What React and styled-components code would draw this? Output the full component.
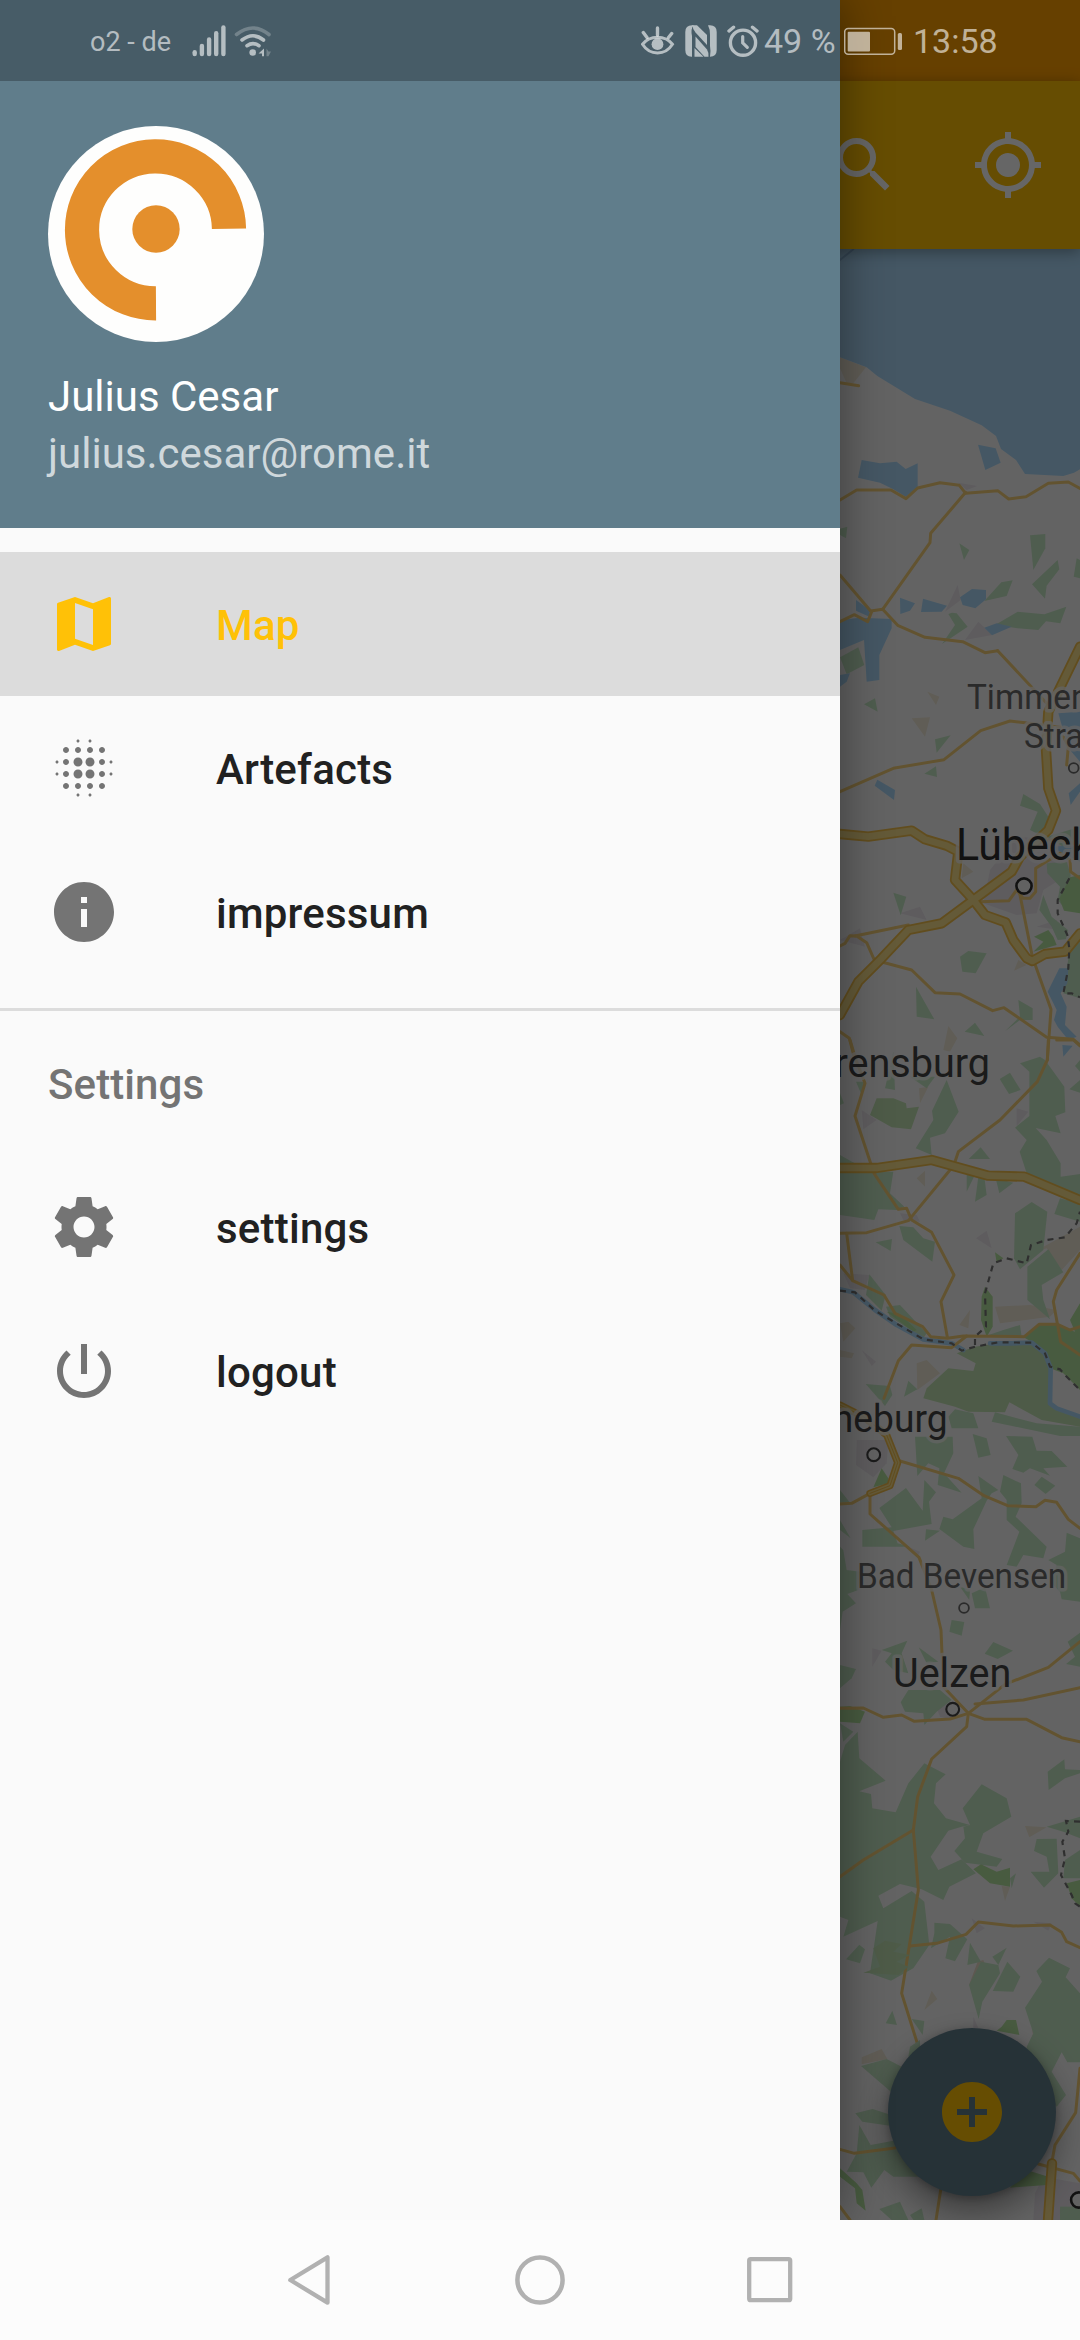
import React from "react";
import styled, { createGlobalStyle } from "styled-components";
import { MdMap, MdBlurOn, MdInfo, MdSearch, MdMyLocation, MdAddCircle } from "react-icons/md";

const GlobalStyle = createGlobalStyle`
  *, *::before, *::after { box-sizing: border-box; }
  body { margin: 0; font-family: Roboto, "Noto Sans", sans-serif; }
  svg { display: block; }
`;

const Screen = styled.div`
  width: 1080px;
  height: 2340px;
  display: flex;
  flex-direction: column;
  overflow: hidden;
  background: #fcfcfc;
`;

const AppWindow = styled.div`
  position: relative;
  flex: 1;
  min-height: 0;
  overflow: hidden;
`;

const Page = styled.main`
  height: 100%;
  display: flex;
  flex-direction: column;
`;

const StatusBackdrop = styled.div`
  height: 81px;
  background: ${(p) => p.$color};
  flex: none;
`;

const AppBar = styled.header`
  height: 168px;
  flex: none;
  display: flex;
  align-items: center;
  justify-content: flex-end;
  gap: 72px;
  padding: 0 36px;
  background: #ffc107;
  color: #fff;
  box-shadow: 0 3px 14px rgba(0, 0, 0, 0.35);
  z-index: 1;
`;

const MapArea = styled.section`
  position: relative;
  flex: 1;
  min-height: 0;
  overflow: hidden;
  background: #f8f8f8;
`;

const Fab = styled.button`
  position: absolute;
  right: 24px;
  bottom: 24px;
  width: 168px;
  height: 168px;
  padding: 0;
  border: 0;
  border-radius: 50%;
  display: grid;
  place-items: center;
  background: #607d8b;
  color: #ffc107;
  box-shadow: 0 16px 34px rgba(0, 0, 0, 0.4), 0 2px 8px rgba(0, 0, 0, 0.25);
`;

const Scrim = styled.div`
  position: absolute;
  inset: 0;
  z-index: 2;
  background: rgba(0, 0, 0, 0.6);
`;

const Drawer = styled.aside`
  position: absolute;
  inset: 0 auto 0 0;
  z-index: 3;
  width: 840px;
  background: #fafafa;
  box-shadow: 0 0 46px rgba(0, 0, 0, 0.42);
`;

const DrawerHeader = styled.div`
  height: 528px;
  display: flex;
  flex-direction: column;
  background: #607d8b;
`;

const Account = styled.div`
  display: flex;
  flex-direction: column;
  align-items: flex-start;
  padding: 45px 48px 0;
`;

const Avatar = styled.div`
  width: 216px;
  height: 216px;
  border-radius: 50%;
  overflow: hidden;
  background: #fefefd;
`;

const AccountLine = styled.div`
  margin-top: ${(p) => p.$gap}px;
  font-size: 42px;
  line-height: 50px;
  color: ${(p) => p.$color};
`;

const Menu = styled.nav`
  padding-top: 24px;
`;

const MenuItem = styled.a`
  height: 144px;
  padding: 0 48px;
  display: flex;
  align-items: center;
  gap: 96px;
  color: ${(p) => (p.$active ? "#ffc107" : "#212121")};
  background: ${(p) => (p.$active ? "#dcdcdc" : "transparent")};
  svg { flex: none; color: ${(p) => (p.$active ? "#ffc107" : "#747474")}; }
`;

const MenuLabel = styled.span`
  padding-top: 3px;
  font-size: 42px;
  font-weight: 500;
  line-height: 50px;
  letter-spacing: 0.22px;
`;

const Divider = styled.div`
  height: 3px;
  margin-top: 24px;
  background: #dcdcdc;
`;

const SectionTitle = styled.h2`
  height: 144px;
  margin: 0;
  padding: 3px 48px 0;
  display: flex;
  align-items: center;
  font-size: 42px;
  font-weight: 500;
  letter-spacing: 0.1px;
  color: #747474;
`;

const StatusBar = styled.div`
  position: absolute;
  inset: 0 0 auto 0;
  z-index: 4;
  height: 81px;
  padding: 0 83px 0 90px;
  display: flex;
  align-items: center;
  justify-content: space-between;
  color: rgba(255, 255, 255, 0.6);
`;

const StatusGroup = styled.div`
  display: flex;
  align-items: center;
  gap: ${(p) => p.$gap}px;
`;

const StatusText = styled.span`
  font-size: ${(p) => p.$size}px;
  line-height: 40px;
  padding-top: ${(p) => p.$drop || 0}px;
  width: ${(p) => p.$width}px;
  margin-left: ${(p) => p.$shift || 0}px;
  white-space: nowrap;
`;

const NavBar = styled.footer`
  height: 120px;
  flex: none;
  display: flex;
  justify-content: center;
  background: #fcfcfc;
`;

const NavButton = styled.button`
  width: 230px;
  padding: 0;
  border: 0;
  background: none;
  display: grid;
  place-items: center;
`;

const GEAR =
  "M19.43 12.98c.04-.32.07-.64.07-.98s-.03-.66-.07-.98l2.11-1.65c.19-.15.24-.42.12-.64l-2-3.46c-.12-.22-.39-.3-.61-.22l-2.49 1c-.52-.4-1.08-.73-1.69-.98l-.38-2.65C14.46 2.18 14.25 2 14 2h-4c-.25 0-.46.18-.49.42l-.38 2.65c-.61.25-1.17.59-1.69.98l-2.49-1c-.23-.09-.49 0-.61.22l-2 3.46c-.13.22-.07.49.12.64l2.11 1.65c-.04.32-.07.65-.07.98s.03.66.07.98l-2.11 1.65c-.19.15-.24.42-.12.64l2 3.46c.12.22.39.3.61.22l2.49-1c.52.4 1.08.73 1.69.98l.38 2.65c.03.24.24.42.49.42h4c.25 0 .46-.18.49-.42l.38-2.65c.61-.25 1.17-.59 1.69-.98l2.49 1c.23.09.49 0 .61-.22l2-3.46c.12-.22.07-.49-.12-.64l-2.11-1.65zM12 15.5c-1.93 0-3.5-1.57-3.5-3.5s1.57-3.5 3.5-3.5 3.5 1.57 3.5 3.5-1.57 3.5-3.5 3.5z";
const POWER =
  "M13 3h-2v10h2V3zm4.83 2.17l-1.42 1.42C17.99 7.86 19 9.81 19 12c0 3.87-3.13 7-7 7s-7-3.13-7-7c0-2.19 1.01-4.14 2.58-5.42L6.17 5.17C4.23 6.82 3 9.26 3 12c0 4.97 4.03 9 9 9s9-4.03 9-9c0-2.74-1.23-5.18-3.17-6.83z";

const GlyphIcon = ({ d }) => (
  <svg width="72" height="72" viewBox="0 0 24 24" fill="currentColor"><path d={d} /></svg>
);

// Map tiles, stacked north to south. Units are thirds of a pixel.
const TILES = [
  {
    y: 240,
    sand: ["30,352 108,382 70,430 50,430 30,385"],
    town: ["383,1035 392,1080 345,1115", "445,1145 487,1185 405,1200", "385,728 442,738 410,750"],
    wood: [
      "30,866 52,860 48,895 30,885", "388,910 418,930 402,960", "600,886 646,882 646,925 610,990",
      "683,960 688,988 650,1037 645,1076 606,1033", "740,955 750,960 750,1015 731,1010",
      "514,1027 548,1021 530,1068 463,1083",
      "563,1115 643,1123 709,1100 691,1150 648,1144 625,1170 563,1165 495,1155",
      "366,1118 380,1120 413,1160 336,1212 375,1155 355,1122",
    ],
    water: [
      "30,0 750,0 750,688 732,698 700,708 585,702 558,660 513,627 498,588 455,556 360,512 255,477 142,408 110,382 30,352",
      "95,660 150,670 200,665 227,687 263,670 263,745 227,770 190,748 150,728 84,713",
      "444,614 497,625 512,668 466,690", "390,1072 426,1047 468,1050 468,1078 436,1105 398,1095",
      "210,1073 255,1090 240,1112 211,1122", "279,1076 351,1097 335,1115 273,1116",
      "78,1080 120,1110 118,1130 78,1112", "463,1163 500,1150 545,1160 486,1186",
      "30,1140 90,1133 185,1137 185,1165 148,1245 148,1320 110,1325 102,1200 30,1230",
    ],
    roads: [
      "30,780 80,750 183,750 228,776 263,744 330,728 388,736 407,760 503,752 536,777 588,770 655,730 715,726 750,745",
      "407,757 302,880 300,908 158,1108",
      "30,1005 122,1113 158,1108 203,1156 285,1192 398,1205 465,1238 503,1232",
      "30,1145 73,1124 113,1145 125,1115", "30,428 86,437",
    ],
    ferry: ["30,60 70,28"],
  },
  {
    y: 640,
    sand: ["245,235 300,232 285,290", "292,155 328,170 318,195", "355,1158 382,1195 360,1235 340,1230", "400,670 430,695 395,715", "565,960 590,975 552,992"],
    town: [
      "480,690 560,590 700,600 720,700 640,750 620,820 560,825 460,790",
      "210,820 270,800 290,840", "30,900 90,865 105,920", "620,860 680,840 690,870",
    ],
    wood: [
      "30,52 85,22 103,75 50,103", "135,175 102,193 143,215", "315,298 362,286 320,338", "318,379 321,411 283,401",
      "580,462 630,492 655,530 640,590 600,570 623,515 570,497",
      "650,670 710,665 722,705 715,760 700,800 683,780 690,740 652,700", "650,590 750,560 750,610 700,620",
      "640,765 665,830 714,870 708,898 683,900 665,860 628,810", "720,920 750,890 750,1075 700,1060",
      "390,950 415,933 470,940 437,1000 397,995", "190,758 229,770 212,826", "258,1040 313,1138 260,1130",
      "565,1080 608,1105 608,1140 570,1140 525,1174 570,1130", "435,1148 463,1188 404,1175",
    ],
    park: ["750,705 720,712 688,775 702,812 750,820", "612,890 655,870 670,890 680,915 610,935 640,905"],
    water: [
      "30,105 60,100 50,125 30,140", "142,419 195,450 192,480 134,437",
      "685,220 750,215 750,365 720,330 695,255", "716,460 750,430 750,455 722,495",
      "660,620 750,615 750,665 700,640",
      "688,985 715,985 712,1030 692,1060 710,1100 705,1155 740,1190 715,1200 683,1160 672,1140 680,1110 653,1055",
      "697,1215 728,1217 700,1250",
    ],
    roads: [
      "503,32 650,190", "30,455 190,385 342,359 452,272 540,243 600,250 690,262", "700,290 715,320 710,375",
      "75,888 235,855",
      "30,918 45,910 60,887 80,888 110,908 133,960 245,990 315,1058 390,1062 488,1112 522,1103 650,1192 730,1198 750,1215",
      "570,765 607,950 663,1108 652,1260",
      "450,785 537,782 560,750 580,775 600,775 617,755 617,685 690,640 720,660 722,695 750,715",
      "30,1175 58,1195 75,1260", "600,600 690,600 750,615",
    ],
    highways: [
      "750,20 655,215 648,330 655,445 678,512 655,570 570,650 545,695 430,780 335,850 235,870 155,955 85,1025 30,1125",
      "30,582 115,590 245,572 285,598 350,617 385,635 375,720 430,780 465,825 527,847 550,900 590,955 607,963 645,942 705,935 750,880",
    ],
    borders: ["718,715 683,780 683,820 712,885 718,925 715,985 700,1060 725,1060 750,1072"],
  },
  {
    y: 1040,
    sand: [
      "605,640 750,560 750,630 695,690 650,625", "495,800 600,795 680,810 660,830 510,850",
      "260,970 290,960 330,1000 262,1050", "30,850 55,845 76,865 40,905", "267,145 295,140 270,190",
      "420,810 415,865 388,855", "260,415 285,392 285,440", "30,930 72,940 65,955 30,950",
    ],
    town: [
      "95,210 140,240 100,268", "560,205 595,215 560,258", "470,572 485,625 438,595",
      "40,700 118,705 105,750 60,745", "95,930 138,965 125,978", "210,520 260,525 270,545 220,540",
    ],
    wood: [
      "570,70 630,50 645,60 703,140 706,217 676,228 692,280 617,264 650,300 692,370 692,410 750,402 750,480 690,455 590,400 569,335 590,300 555,263 598,228 598,95",
      "540,98 572,150 537,162 509,117", "350,120 386,215 345,280 300,293 305,345 257,325 310,240 306,213",
      "452,322 480,357 416,357", "410,400 432,410 410,455", "445,410 463,410 470,465 435,485", "497,415 550,428 508,460",
      "30,345 120,395 190,395 180,460 223,500 200,510 145,508 133,540 30,525",
      "605,486 652,515 640,630 570,688 552,655 555,520", "690,475 750,490 750,545 673,522",
      "208,558 250,562 280,595 315,605 307,665 220,600", "137,607 186,597 182,633",
      "655,628 700,697 635,735 640,780 660,838 592,780 592,680", "118,703 167,765 155,812 108,765",
      "168,800 210,795 290,880 280,895 180,830", "520,870 570,855 575,890 460,890",
      "375,1108 430,1120 445,1165 365,1165 355,1130", "495,1117 620,1150 750,1160 750,1188 690,1188 485,1145",
      "107,1032 180,1038 187,1065 165,1098", "235,1022 262,1048 222,1070", "428,1182 470,1195 482,1245 445,1253",
      "78,125 105,125 95,165", "190,35 195,150 165,145", "240,110 315,110 290,145", "30,160 42,190 30,195", "750,60 735,78 750,95", "750,120 718,148 750,158",
    ],
    meadow: [
      "380,940 435,920 500,910 605,908 650,950 660,1000 665,1100 750,1130 750,1160 635,1140 538,1087 525,1117 415,1115 375,1100 280,1075 290,1045 355,985 430,993 437,970",
      "140,175 190,175 228,190 230,205 267,200 243,268 185,262 120,225",
    ],
    park: [
      "465,740 488,770 488,860 470,890 453,840 455,770", "495,637 520,655 500,668",
      "583,893 627,855 683,855 735,875 720,840 750,790 750,1050 700,1000 660,985 640,935 605,905",
      "170,815 210,822 260,870 250,875",
    ],
    rivers: [
      "30,748 70,757 135,810 200,855 280,898 365,910 400,930", "480,910 545,910 605,908 645,940 662,985 660,1090 680,1105 750,1130",
    ],
    roads: [
      "60,0 78,60 105,130 75,228 122,370 132,400 205,508 230,505 245,540 305,577 372,705 333,785 352,892",
      "655,0 652,60 622,125 510,240 385,335 375,365 360,390 245,530 235,542 110,578 30,580",
      "50,580 68,722 162,765 195,820 278,860 302,890 352,895 400,888 583,890 627,853 683,853 720,870 750,860",
      "30,675 68,722", "410,888 365,923 245,915 205,962 162,1075", "750,640 680,750 670,785 692,905 750,945",
      "680,0 730,0 750,18",
    ],
    highways: ["30,384 140,384 305,360 475,407 583,410 750,480"],
    borders: [
      "30,752 75,757 135,812 280,898 365,910 395,932 435,920 505,907 605,908 645,940 660,980 690,988 705,1005 750,1050",
      "435,915 435,890 468,860 465,760 490,670 530,655 590,670 603,615 650,600 705,592 740,550 750,515",
    ],
  },
  {
    y: 1440,
    sand: ["585,1158 650,1162 598,1192"],
    town: ["80,0 175,0 170,70 130,112 78,75", "235,320 270,335 262,350", "127,625 155,632 127,680", "320,805 350,790 370,840 330,830"],
    wood: [
      "255,-10 368,-10 370,40 342,100 395,158 323,135 328,85 295,70 262,108",
      "528,-12 607,-10 620,32 665,33 712,80 640,85 660,107 600,85 580,98 547,87 565,45",
      "30,240 62,295 30,270", "30,150 60,188 30,188",
      "228,144 278,212 283,120 318,157 297,185 305,252 190,273 203,310 240,320 97,320 97,270 185,262 148,204",
      "288,268 330,272 285,302",
      "445,108 505,150 485,160 470,182 430,268 433,327 400,320 328,267 340,230 368,238 455,175",
      "520,105 573,130 575,190 557,230 650,320 640,355 580,345 560,380 530,375 568,275 530,240 530,180 510,155",
      "635,110 676,137 647,162 613,135",
      "30,320 40,330 50,390 90,395 85,450 52,462 78,490 38,515 30,570",
      "710,278 750,295 750,485 695,478 690,455 665,430 680,375 655,360 705,335",
      "425,460 465,442 480,505 435,505", "365,540 403,546 395,587 358,575", "390,440 420,450 418,480",
      "490,606 549,632 503,657 464,641", "713,605 750,578 750,680 708,672 735,650",
      "30,675 78,687 65,715 30,745",
      "155,630 232,602 215,640 235,700 190,690 165,665 185,640", "266,622 325,665 290,670",
      "235,750 330,750 365,780 320,815 283,855 280,820 225,815 212,787", "30,850 70,875 40,905",
      "30,965 45,915 83,875 88,955 167,1022 88,1054 123,1062 127,1105 197,1117 235,1030 283,970 347,1003 318,1030 312,1090 348,1135 420,1155 395,1160 355,1172 302,1250 325,1290 395,1258 438,1300 358,1340 340,1380 275,1348 210,1332 145,1367 160,1405 245,1353 283,1385 298,1515 250,1585 183,1622 120,1600 143,1443 40,1490 55,1440 30,1430",
      "455,1033 530,1075 544,1130 460,1180 440,1235 517,1257 500,1280 405,1268 373,1233 405,1195 400,1160 420,1155 398,1105",
      "653,995 703,958 705,988 750,990 750,1000 705,1015 656,1050", "650,1160 750,1130 750,1195 700,1175",
    ],
    park: ["30,800 60,798 105,815 90,850 30,845", "155,85 175,115 175,130 130,142"],
    roads: [
      "200,60 385,115 462,167 533,197 618,200 645,181 680,187 715,238 750,265",
      "30,192 65,190 120,160 120,222 267,352 305,450 333,570 340,740 415,820 410,860 305,957 263,1070 250,1170 265,1350 215,1660 265,1820",
      "30,805 100,804 160,832 215,825 253,844 360,837 415,820 525,733 655,682 750,605",
      "435,792 580,780 750,743", "415,820 465,838 590,838 695,893 750,905", "250,1170 100,1260 30,1310",
    ],
    arterials: ["30,-105 100,-70 170,-15 203,68 180,137 120,160"],
  },
  {
    y: 1820,
    sand: [
      "95,712 155,687 172,717 95,733", "305,512 322,537 283,570", "605,625 655,635 610,650", "515,198 540,200 525,243",
    ],
    town: ["425,295 465,325 440,340", "610,305 665,310 655,332", "640,1070 750,1090 750,1200 610,1200 615,1120", "430,590 445,625 430,625"],
    wood: [
      "620,57 680,56 685,160 642,203 602,155 658,155 650,110 612,93", "540,175 558,160 545,205",
      "705,120 750,90 750,175 700,175", "313,308 360,312 412,358 375,424 346,415 360,350 303,385 313,340",
      "420,368 453,425 412,435", "453,425 505,435 510,460 457,545 446,597 417,495", "487,410 530,383 505,435",
      "532,425 571,470 550,515 488,513",
      "657,413 720,445 707,472 750,520 750,727 712,727 695,697 665,755 708,825 680,860 590,760 590,680 610,640 585,563 636,485 619,453",
      "88,374 105,388 90,430 48,418", "187,572 201,615 167,610", "245,597 283,603 278,645",
      "240,680 270,660 270,700 235,710", "93,738 170,717 215,740 200,830", "76,880 128,867 200,890 200,920 97,905",
      "88,915 122,975 190,962 230,990 280,1070 190,1070 163,1050 124,1103 100,1057 50,1055 80,1000",
      "148,1167 210,1145 235,1200 185,1200", "240,1185 275,1165 283,1200 250,1200", "690,1160 750,1160 750,1200 690,1200",
    ],
    park: [
      "430,148 453,133 500,155 540,143 540,200 480,190", "710,190 750,180 750,260 725,235",
      "515,620 530,600 558,600 568,645 500,632", "30,1045 80,1090 97,1110 107,1172 80,1150 75,1105 30,1070",
      "590,1050 655,1070 650,1095 540,1103",
    ],
    meadow: ["130,385 165,362 215,372 190,395 240,405 200,425 235,440 205,465 100,458 150,440"],
    clay: ["443,425 460,420 473,455 417,495"],
    roads: [
      "240,378 320,370 408,343 445,306 550,318 660,315 695,337 710,365 750,383", "30,988 73,1000 195,984",
      "30,1160 60,1200", "332,1110 318,1200", "750,745 737,878 675,975 665,1030", "625,1032 730,1060 750,1083",
    ],
    highways: ["666,1030 653,1215"],
    borders: ["750,5 708,3 715,35 697,65 705,115 693,165 725,225 735,250 750,260"],
  },
];

const AREAS = [
  ["sand", "#f0e8d6"],
  ["town", "#ebe5ec"],
  ["clay", "#eadcc8"],
  ["wood", "#c6e8c6"],
  ["meadow", "#c3e4b4"],
  ["park", "#b5e3a0"],
  ["water", "#acdafa"],
];

const LINES = [
  ["rivers", "#acdafa", 14],
  ["ferry", "#8fbbe0", 6],
  ["roads", "#f6cf78", 9],
  ["arterials", "#f3bf4e", 22],
  ["arterials", "#fbe08c", 12],
  ["arterials", "#f3bf4e", 3],
  ["highways", "#f3c04d", 31],
  ["highways", "#fbe08c", 20],
];

const MapTile = ({ tile }) => (
  <g transform={`translate(830 ${tile.y - 249}) scale(${1 / 3})`}>
    {AREAS.map(([kind, color]) =>
      (tile[kind] || []).map((points) => <polygon key={points} points={points} fill={color} />)
    )}
    {LINES.map(([kind, color, width]) =>
      (tile[kind] || []).map((points) => (
        <polyline key={points + width} points={points} fill="none" stroke={color} strokeWidth={width} strokeLinejoin="round" strokeLinecap="round" />
      ))
    )}
    {(tile.borders || []).map((points) => (
      <polyline key={points} points={points} fill="none" stroke="#757575" strokeWidth="6.5" strokeDasharray="18 16" />
    ))}
  </g>
);

const PLACES = [
  { name: "Timmendorfer", x: 967, y: 708.5, size: 34.5, color: "#6a6a6a" },
  { name: "Strand", x: 1024, y: 747.5, size: 34.5, color: "#6a6a6a", dot: [1073.7, 768, 4.9, 1.8] },
  { name: "Lübeck", x: 956, y: 860, size: 44.5, color: "#2d2d2d", dot: [1024, 886, 7.6, 2.6] },
  { name: "Ahrensburg", x: 990, y: 1077, size: 41, color: "#454545", end: true },
  { name: "Lüneburg", x: 947.5, y: 1432.3, size: 38.5, color: "#454545", end: true, dot: [873.7, 1454.7, 6.4, 2.1] },
  { name: "Bad Bevensen", x: 857, y: 1587.7, size: 34.5, color: "#6a6a6a", dot: [964, 1608, 4.9, 1.8] },
  { name: "Uelzen", x: 893, y: 1686.7, size: 41, color: "#454545", dot: [952.7, 1709.3, 6.4, 2.1] },
  { name: "", x: 0, y: 0, size: 0, color: "#2d2d2d", dot: [1078.7, 2200, 7.6, 2.6] },
];

const PlaceName = styled.text`
  font-family: Roboto, "Noto Sans", sans-serif;
  paint-order: stroke;
  stroke: rgba(248, 248, 248, 0.75);
  stroke-width: 7px;
  stroke-linejoin: round;
`;

const MapView = () => (
  <svg width="1080" height="1971" viewBox="0 0 1080 1971">
    {TILES.map((tile) => <MapTile key={tile.y} tile={tile} />)}
    {PLACES.map((p) => (
      <g key={p.name + p.x}>
        {p.name && (
          <PlaceName
            transform={`translate(${p.x} ${p.y - 249}) scale(0.965 1)`}
            fontSize={p.size}
            fill={p.color}
            textAnchor={p.end ? "end" : "start"}
          >
            {p.name}
          </PlaceName>
        )}
        {p.dot && (
          <circle cx={p.dot[0]} cy={p.dot[1] - 249} r={p.dot[2]} fill="#f4f4f4" stroke={p.color} strokeWidth={p.dot[3]} />
        )}
      </g>
    ))}
  </svg>
);

const AvatarMark = () => (
  <svg width="216" height="216" viewBox="0 0 216 216">
    <path d="M108 177.3A73.5 73.5 0 1 1 181 102.7" fill="none" stroke="#e48f2c" strokeWidth="34.2" />
    <circle cx="108" cy="103" r="23.7" fill="#e48f2c" />
  </svg>
);

const SignalIcon = () => (
  <svg width="34" height="32" viewBox="192 24 34 32" fill="currentColor">
    <rect x="192.5" y="49" width="4.4" height="6.3" rx="2.2" />
    <rect x="199.7" y="42.7" width="4.4" height="12.6" rx="2.2" />
    <rect x="206.9" y="36.3" width="4.4" height="19" rx="2.2" />
    <rect x="214" y="30" width="4.4" height="25.3" rx="2.2" />
    <rect x="221.2" y="24.3" width="4.4" height="31" rx="2.2" />
  </svg>
);

const WifiIcon = () => (
  <svg width="38" height="32" viewBox="234 24 38 32" fill="none" stroke="currentColor" strokeWidth="3.6" strokeLinecap="round">
    <path d="M236.5 33.5Q253 20.5 269 33.5" opacity="0.4" />
    <path d="M242 39Q253 30.5 263.5 39" />
    <path d="M247 44.7Q253 40.5 259 44.7" />
    <circle cx="252.7" cy="51.5" r="3.3" fill="currentColor" stroke="none" />
    <path d="M264 47.5V55.3H262V52.5H258.5Z" fill="currentColor" stroke="none" />
    <path d="M266.500 47.500V55.300H268.500L271 50.500H268.500Z" fill="currentColor" stroke="none" opacity="0.4" />
  </svg>
);

const EyeIcon = () => (
  <svg width="34" height="32" viewBox="641 24 34 32" fill="none" stroke="currentColor" strokeWidth="3.4" strokeLinecap="round">
    <path d="M642.5 43.3C650 34 665 34 672.5 43.3C665 55 650 55 642.5 43.3Z" strokeWidth="3" />
    <circle cx="657.5" cy="43.2" r="5.9" fill="currentColor" stroke="none" />
    <path d="M657.5 27V34M643.3 31.5L647 36.5M671.7 32.5L668.5 36.5" />
  </svg>
);

const NfcIcon = () => (
  <svg width="32" height="32" viewBox="685 24 32 32" fill="currentColor">
    <path d="M692 24.3H693.5Q690.5 28 692 35V55.7Q685.3 56 685.3 49V31Q685.3 24.3 692 24.3Z" />
    <path d="M692.5 24.3H697L707 34V44L695.5 31.5Q692.5 28 692.5 24.3Z" />
    <path d="M695.5 35.5L707 48.5Q709 52 708.5 55.7H704.5L695.5 46Z" />
    <path d="M694.5 47L703.5 55.7H694.5Z" />
    <path d="M708 24.3H710Q716.7 24.3 716.7 31V49Q716.7 55.7 710 55.7Q711 50 710 45V34Q710 28 708 24.3Z" />
  </svg>
);

const AlarmIcon = () => (
  <svg width="32" height="32" viewBox="727 24 32 32" fill="none" stroke="currentColor" strokeLinecap="round">
    <circle cx="743" cy="41.7" r="12.6" strokeWidth="3.4" />
    <path d="M729 30L733.5 26.2M757 30L752.5 26.2" strokeWidth="3.4" />
    <path d="M742.7 35.5V41.8L747.3 46.3" strokeWidth="3.2" />
  </svg>
);

const BatteryIcon = () => (
  <svg width="59" height="32" viewBox="844 24 59 32" fill="currentColor">
    <rect x="844.7" y="27.4" width="50" height="25.9" rx="3.5" fill="none" stroke="currentColor" strokeWidth="1.5" />
    <rect x="847.7" y="30.7" width="22.3" height="19.7" rx="1" />
    <rect x="897.8" y="32" width="4.2" height="17" rx="1.5" />
  </svg>
);

const PRIMARY = [
  { label: "Map", icon: <MdMap size={72} />, active: true },
  { label: "Artefacts", icon: <MdBlurOn size={72} /> },
  { label: "impressum", icon: <MdInfo size={72} /> },
];
const SECONDARY = [
  { label: "settings", icon: <GlyphIcon d={GEAR} /> },
  { label: "logout", icon: <GlyphIcon d={POWER} /> },
];

const renderItem = (item) => (
  <MenuItem key={item.label} $active={item.active}>
    {item.icon}
    <MenuLabel>{item.label}</MenuLabel>
  </MenuItem>
);

export default function App() {
  return (
    <>
      <GlobalStyle />
      <Screen>
        <AppWindow>
          <Page>
            <StatusBackdrop $color="#ffa000" />
            <AppBar>
              <MdSearch size={72} />
              <MdMyLocation size={72} />
            </AppBar>
            <MapArea>
              <MapView />
              <Fab aria-label="Add"><MdAddCircle size={72} /></Fab>
            </MapArea>
          </Page>
          <Scrim />
          <Drawer>
            <DrawerHeader>
              <StatusBackdrop $color="rgba(0, 0, 0, 0.26)" />
              <Account>
                <Avatar><AvatarMark /></Avatar>
                <AccountLine $gap={30} $color="#ffffff">Julius Cesar</AccountLine>
                <AccountLine $gap={7} $color="#cfd8dc">julius.cesar@rome.it</AccountLine>
              </Account>
            </DrawerHeader>
            <Menu>
              {PRIMARY.map(renderItem)}
              <Divider />
              <SectionTitle>Settings</SectionTitle>
              {SECONDARY.map(renderItem)}
            </Menu>
          </Drawer>
          <StatusBar>
            <StatusGroup $gap={8}>
              <StatusText $size={27} $width={94} $drop={3}>o2 - de</StatusText>
              <SignalIcon />
              <WifiIcon />
            </StatusGroup>
            <StatusGroup $gap={10}>
              <EyeIcon />
              <NfcIcon />
              <AlarmIcon />
              <StatusText $size={34} $width={70} $shift={-5}>49 %</StatusText>
              <BatteryIcon />
              <StatusText $size={34} $width={84}>13:58</StatusText>
            </StatusGroup>
          </StatusBar>
        </AppWindow>
        <NavBar>
          <NavButton aria-label="Back">
            <svg width="46" height="52" viewBox="0 0 46 52" fill="none" stroke="#b1b1b1" strokeWidth="4.3" strokeLinejoin="round">
              <path d="M3.3 26L40.5 3.3V48.7Z" />
            </svg>
          </NavButton>
          <NavButton aria-label="Home">
            <svg width="50" height="50" viewBox="0 0 50 50" fill="none" stroke="#b1b1b1" strokeWidth="4.5">
              <circle cx="25" cy="25" r="22.6" />
            </svg>
          </NavButton>
          <NavButton aria-label="Recent apps">
            <svg width="46" height="46" viewBox="0 0 46 46" fill="none" stroke="#b1b1b1" strokeWidth="4.3" strokeLinejoin="round">
              <rect x="2.2" y="2.2" width="41" height="41" rx="1.5" />
            </svg>
          </NavButton>
        </NavBar>
      </Screen>
    </>
  );
}
